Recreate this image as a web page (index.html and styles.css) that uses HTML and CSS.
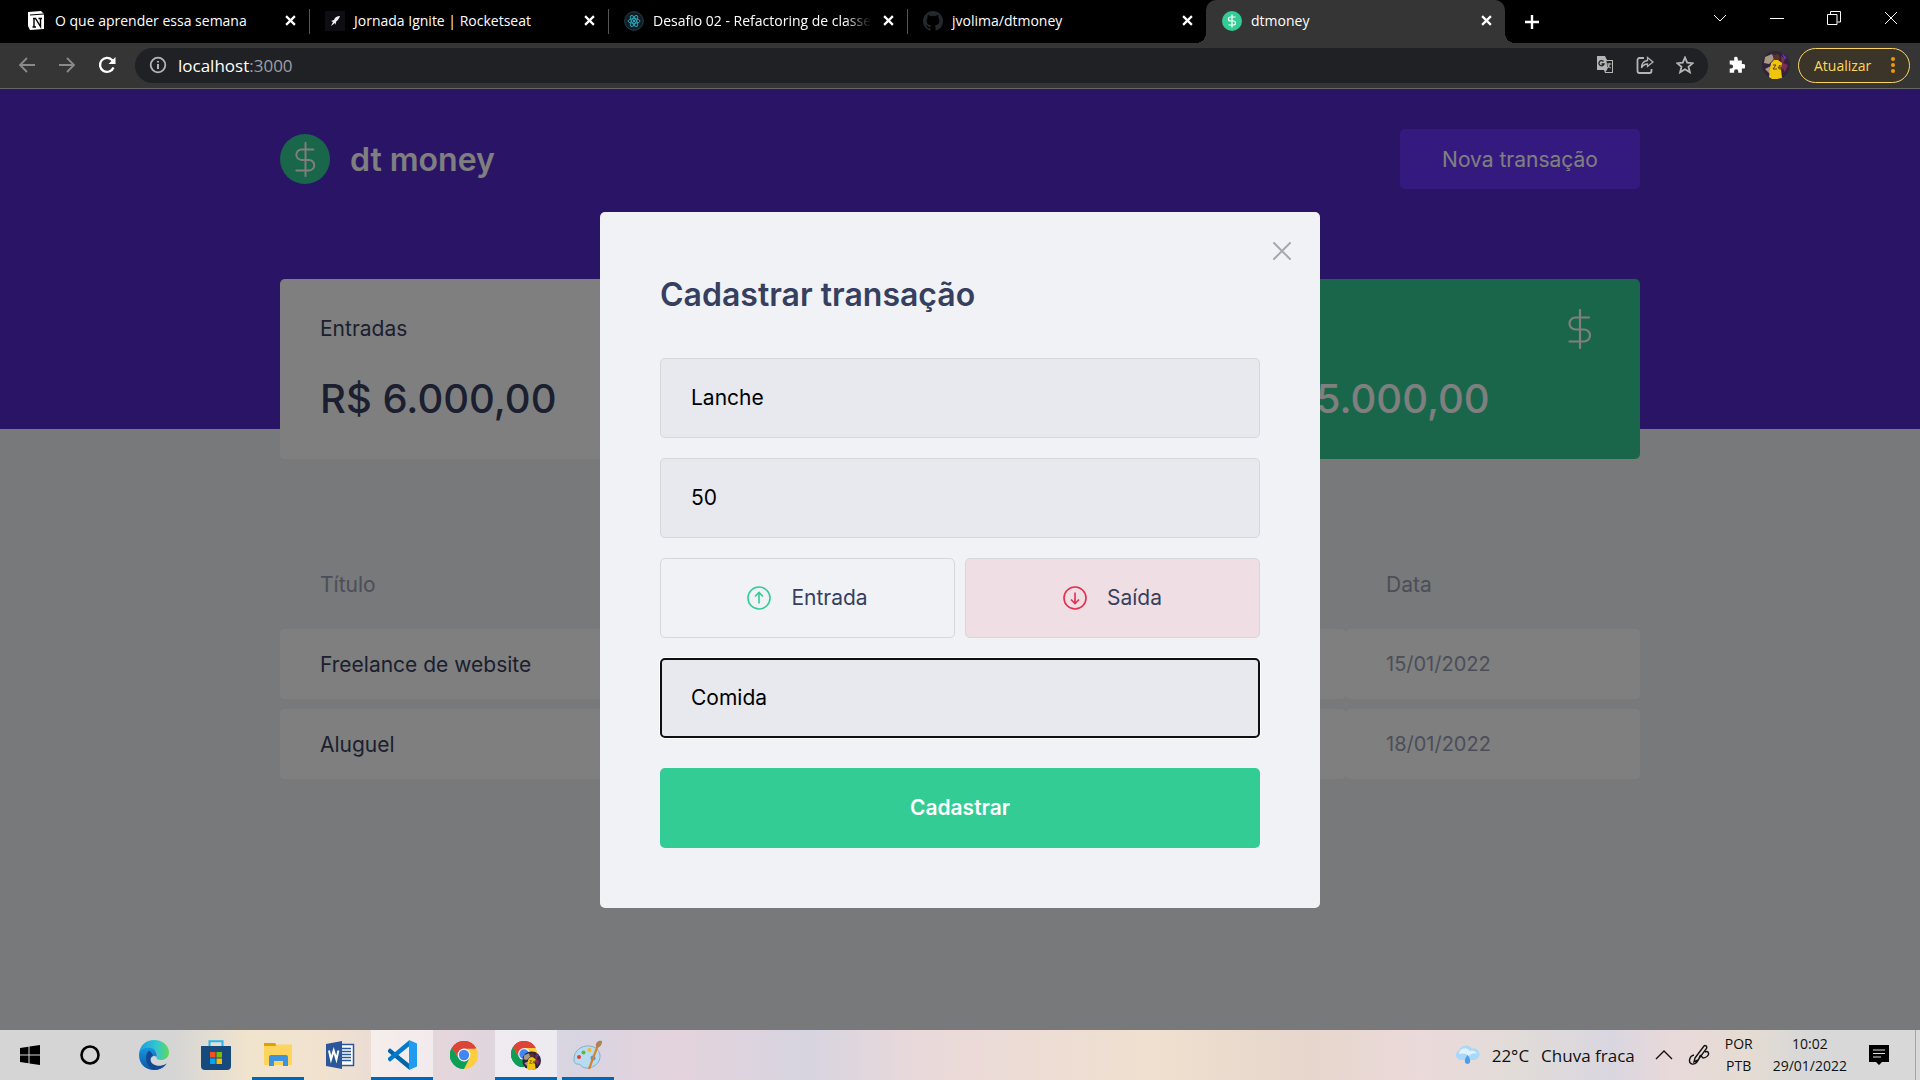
FILE: index.html
```html
<!DOCTYPE html>
<html lang="pt-BR">
<head>
<meta charset="utf-8">
<title>dtmoney</title>
<link rel="stylesheet" href="styles.css">
</head>
<body>
<svg class="defs" aria-hidden="true">
  <symbol id="x" viewBox="0 0 10 10"><path d="M1 1l8 8M9 1l-8 8" fill="none" stroke="currentColor" stroke-width="2"/></symbol>
  <symbol id="dollar" viewBox="0 0 24 40"><path d="M12 1v38M21 8.500H7.500a6 6 0 0 0 0 12H16a6 6 0 0 1 0 12H1.500" fill="none" stroke="currentColor" stroke-width="2.200" stroke-linecap="round"/></symbol>
  <symbol id="chrome" viewBox="0 0 48 48"><path d="M24 24L3.200 12A24 24 0 0 1 44.800 12z" fill="#db4437"/><path d="M24 24L44.800 12A24 24 0 0 1 24 48z" fill="#ffcd40"/><path d="M24 24v24A24 24 0 0 1 3.200 12z" fill="#0f9d58"/><path d="M24 13h20.800L34 29 24 48l9.500-18.500zM3.200 12L14.500 29.500 24 24z" fill="#ffcd40"/><path d="M24 13h21.300A24 24 0 0 0 3.200 12l11.300 17z" fill="#db4437"/><path d="M3.200 12l11.300 17.500L24 35l9.500-5.500L24 48A24 24 0 0 1 3.200 12z" fill="#0f9d58"/><circle cx="24" cy="24" r="11" fill="#f4f4f4"/><circle cx="24" cy="24" r="8.800" fill="#4285f4"/></symbol>
  <symbol id="player" viewBox="0 0 28 28"><circle cx="14" cy="14" r="14" fill="#30233a"/><path d="M3 6l7-3 2 5-5 5-5-1zM3 18l6-3v9z" fill="#a99a85"/><path d="M19 5l4 3-2 4 5 2-3 7-3-4z" fill="#7d2e52"/><path d="M20 2l5 5-3 1z" fill="#7731b0"/><path d="M11 4l5-1 2 4-2 3h-4z" fill="#5b3423"/><path d="M9 12l3-3h4l4 3-1 6 1 9-5 1h-5l-3-2 1-8z" fill="#f0c50d"/><path d="M11 14h3l-3 4h4M18 14l-2 3h3m-1-3v5" fill="none" stroke="#60410f" stroke-width="1"/></symbol>
</svg>

<header class="browser">
  <div class="tabstrip">
    <div class="tabs">
      <div class="tab">
        <svg class="favicon" viewBox="0 0 20 20"><path d="M2 1l13-1 3 3v15l-14 1-2-4z" fill="#fff"/><path d="M4 4l14-1" stroke="#000"/><path d="M7 7.500h2.500l5 8V7.500m-2 0h3.500M8 7.500V16m-1.500 0H10" fill="none" stroke="#000" stroke-width="1.400"/></svg>
        <span class="tab-title">O que aprender essa semana</span>
        <button class="tab-close" aria-label="Fechar"><svg><use href="#x"/></svg></button>
      </div>
      <div class="tab">
        <svg class="favicon" viewBox="0 0 20 20"><path d="M0 0h20v20H0z" fill="#0d0d12"/><path d="M15 5c-3 0-5 1-6 4l-3 1 2 1-2 4 4-3 .5 2 .7-3.500C13 9 14 8 15 5z" fill="#f1f1f1"/></svg>
        <span class="tab-title">Jornada Ignite | Rocketseat</span>
        <button class="tab-close" aria-label="Fechar"><svg><use href="#x"/></svg></button>
      </div>
      <div class="tab">
        <svg class="favicon" viewBox="0 0 20 20"><circle cx="10" cy="10" r="9.300" fill="#121c22" stroke="#1f4351"/><g fill="none" stroke="#25a5bb"><ellipse cx="10" cy="10" rx="6" ry="2.300"/><ellipse cx="10" cy="10" rx="6" ry="2.300" transform="rotate(60 10 10)"/><ellipse cx="10" cy="10" rx="6" ry="2.300" transform="rotate(120 10 10)"/></g><circle cx="10" cy="10" r="1.200" fill="#25a5bb"/></svg>
        <span class="tab-title tab-title-long">Desafio 02 - Refactoring de classe</span>
        <button class="tab-close" aria-label="Fechar"><svg><use href="#x"/></svg></button>
      </div>
      <div class="tab tab-last">
        <svg class="favicon" viewBox="0 0 16 16"><path fill="#24292e" d="M8 0C3.580 0 0 3.580 0 8c0 3.540 2.290 6.530 5.470 7.590.4.070.55-.17.55-.38 0-.19-.01-.82-.01-1.490-2.010.37-2.530-.49-2.690-.94-.09-.23-.48-.94-.82-1.130-.28-.15-.68-.52-.01-.53.63-.01 1.080.58 1.230.82.72 1.210 1.870.87 2.330.66.07-.52.28-.87.51-1.070-1.780-.2-3.640-.89-3.640-3.950 0-.87.31-1.590.82-2.150-.08-.2-.36-1.020.08-2.120 0 0 .67-.21 2.200.82a7.600 7.600 0 0 1 4 0c1.530-1.040 2.200-.82 2.200-.82.44 1.100.16 1.920.08 2.120.51.56.82 1.270.82 2.150 0 3.070-1.870 3.750-3.650 3.950.29.25.54.73.54 1.480 0 1.070-.01 1.930-.01 2.200 0 .21.15.46.55.38A8 8 0 0 0 16 8c0-4.420-3.580-8-8-8z"/></svg>
        <span class="tab-title">jvolima/dtmoney</span>
        <button class="tab-close" aria-label="Fechar"><svg><use href="#x"/></svg></button>
      </div>
      <div class="tab tab-active">
        <svg class="favicon" viewBox="0 0 20 20"><circle cx="10" cy="10" r="10" fill="#33cc95"/><path d="M10 3.500v13M13.500 6H8.500a2 2 0 0 0 0 4h3a2 2 0 0 1 0 4H6.500" fill="none" stroke="#fff" stroke-width="1.200"/></svg>
        <span class="tab-title">dtmoney</span>
        <button class="tab-close" aria-label="Fechar"><svg><use href="#x"/></svg></button>
      </div>
      <button class="new-tab" aria-label="Nova guia"><svg viewBox="0 0 16 16"><path d="M8 1v14M1 8h14" stroke="#fff" stroke-width="2.400"/></svg></button>
    </div>
    <div class="window-controls">
      <button aria-label="Pesquisar guias"><svg viewBox="0 0 14 14"><path d="M1 4l6 6 6-6"/></svg></button>
      <button aria-label="Minimizar"><svg viewBox="0 0 14 14"><path d="M0 7.500h14"/></svg></button>
      <button aria-label="Restaurar"><svg viewBox="0 0 14 14"><path d="M.5 3.500h9.500v10H.5zM3.500 3V.5h10v10.500h-3"/></svg></button>
      <button aria-label="Fechar janela"><svg viewBox="0 0 14 14"><path d="M1 1l12 12M13 1L1 13"/></svg></button>
    </div>
  </div>
  <div class="toolbar">
    <div class="nav">
      <button class="dim" aria-label="Voltar"><svg viewBox="0 0 18 18"><path d="M17 9H2M9 2L2 9l7 7"/></svg></button>
      <button class="dim" aria-label="Avançar"><svg viewBox="0 0 18 18"><path d="M1 9h15M9 2l7 7-7 7"/></svg></button>
      <button aria-label="Recarregar"><svg viewBox="0 0 18 18"><path d="M15.500 11.500A7 7 0 1 1 14 4l2 2" stroke-width="2.300"/><path d="M17.500 1v7h-7z" fill="#fff" stroke="none"/></svg></button>
    </div>
    <div class="address">
      <svg viewBox="0 0 18 18"><circle cx="9" cy="9" r="7.300"/><path d="M9 8v5M9 5v1.600" stroke-width="2"/></svg>
      <span class="url">localhost<span class="port">:3000</span></span>
      <div class="address-actions">
        <svg viewBox="0 0 18 18"><path d="M1 0h8l2 4h6v13H9l-1-3H1z" fill="#b5b5b5" stroke="none"/><path d="M10.500 5H16v11H9.500l2-3z" fill="#202124" stroke="none"/><path d="M7.500 5.500A2.600 2.600 0 1 0 8 8H5.500" stroke="#202124" stroke-width="1.300"/><path d="M11 8h4.500M13.300 7v1c0 2-1 3-2 4m.5-3c.6 1.600 1.700 2.600 3 3" stroke-width="1.100"/></svg>
        <svg viewBox="0 0 18 18"><path d="M8 2H3.500A2 2 0 0 0 1.500 4v11a2 2 0 0 0 2 2h10a2 2 0 0 0 2-2v-2"/><path d="M11.500 1.500L17 6l-5.500 4.500V8C8.500 8 7 9 5.500 12c0-4 2-7 6-7.500z" stroke-width="1.300"/></svg>
        <svg viewBox="0 0 18 18"><path d="M9 1.500l2.200 5.200 5.600.5-4.300 3.600 1.400 5.500L9 13.300l-4.900 3 1.400-5.500L1.200 7.200l5.600-.5z"/></svg>
      </div>
    </div>
    <button class="plain" aria-label="Extensões"><svg viewBox="0 0 20 20"><path d="M8 1.500a2.300 2.300 0 0 1 4 1.500v2h4.500V9H18a2.400 2.400 0 0 1 0 5h-1.500v4.500h-4V17a2.300 2.300 0 0 0-4.600 0v1.500H3V14h1.500a2.300 2.300 0 0 0 0-4.600H3V5h5z" fill="#fff"/></svg></button>
    <button class="plain avatar" aria-label="Perfil"><svg><use href="#player"/></svg></button>
    <button class="update">Atualizar<svg viewBox="0 0 4 18"><circle cx="2" cy="3" r="2"/><circle cx="2" cy="9" r="2"/><circle cx="2" cy="15" r="2"/></svg></button>
  </div>
</header>

<div class="viewport">
  <div class="page">
    <header class="hero">
      <div class="container hero-row">
        <div class="logo"><span class="logo-mark"><svg><use href="#dollar"/></svg></span>dt money</div>
        <button class="new-transaction">Nova transação</button>
      </div>
    </header>
    <main class="container">
      <section class="summary">
        <article class="card"><p>Entradas</p><strong>R$ 6.000,00</strong></article>
        <article class="card"></article>
        <article class="card card-total"><svg><use href="#dollar"/></svg><strong>R$ 5.000,00</strong></article>
      </section>
      <table class="transactions">
        <thead><tr><th>Título</th><th></th><th></th><th class="date">Data</th></tr></thead>
        <tbody>
          <tr><td class="name">Freelance de website</td><td></td><td></td><td>15/01/2022</td></tr>
          <tr><td class="name">Aluguel</td><td></td><td></td><td>18/01/2022</td></tr>
        </tbody>
      </table>
    </main>
  </div>
  <div class="overlay">
    <form class="modal" role="dialog" aria-labelledby="modal-title">
      <button type="button" class="modal-close" aria-label="Fechar modal"><svg viewBox="0 0 20 20"><path d="M2 2l16 16M18 2L2 18" fill="none" stroke="currentColor" stroke-width="2" stroke-linecap="round"/></svg></button>
      <h2 id="modal-title">Cadastrar transação</h2>
      <div class="fields">
        <input type="text" aria-label="Título" value="Lanche">
        <input type="text" inputmode="numeric" aria-label="Valor" value="50">
        <div class="types">
          <button type="button" class="type type-in"><svg viewBox="0 0 24 24"><circle cx="12" cy="12" r="11"/><path d="M12 17.500v-11M8 10.500l4-4 4 4"/></svg><span>Entrada</span></button>
          <button type="button" class="type type-out"><svg viewBox="0 0 24 24"><circle cx="12" cy="12" r="11"/><path d="M12 6.500v11M8 13.500l4 4 4-4"/></svg><span>Saída</span></button>
        </div>
        <input class="focused" type="text" aria-label="Categoria" value="Comida">
      </div>
      <button type="submit" class="submit">Cadastrar</button>
    </form>
  </div>
</div>

<footer class="taskbar">
  <div class="apps">
    <button class="app system" aria-label="Iniciar"><svg viewBox="0 0 20 20"><path d="M0 3l8.500-1.200v7.700H0zM9.500 1.600L20 0v9.500H9.500zM0 10.500h8.500v7.700L0 17zM9.500 10.500H20V20L9.500 18.400z"/></svg></button>
    <button class="app system" aria-label="Cortana"><svg viewBox="0 0 20 20"><circle cx="10" cy="10" r="8.500" fill="none" stroke="#000" stroke-width="2.600"/></svg></button>
  </div>
  <div class="apps pinned">
    <button class="app" aria-label="Edge"><svg viewBox="0 0 30 30"><defs><linearGradient id="e1"><stop stop-color="#1b9de2"/><stop offset=".6" stop-color="#31c8ce"/><stop offset="1" stop-color="#62d957"/></linearGradient><linearGradient id="e2" x2="0" y2="1"><stop stop-color="#1994e0"/><stop offset="1" stop-color="#0b58a5"/></linearGradient></defs><path d="M0 14C1 5 7 0 15 0c9 0 15 6 15 12.500 0 5-4 7.500-8 7.500-3 0-5-1-4.500-2.500 2-3.500 0-8-5-8C6 9.500 1 12 0 14z" fill="url(#e1)"/><path d="M0 15c0-5 6-8 11-7 5 .5 8 5 6.500 9-2-2-5-1-6 2-1.500 4 3 7.500 8 7.500 4 0 7-2 8.500-3.500C26 27 21 30 15 30 6 30 0 23.500 0 15z" fill="url(#e2)"/><path d="M10 10.500C6 14 5 24 14 29.800c5 .6 10-1.800 13-6-6 4-16 2-15.500-5C12 17 13 16 14 15.500c-1-2-2-4-4-5z" fill="#124990"/></svg></button>
    <button class="app" aria-label="Microsoft Store"><svg viewBox="0 0 30 30"><path d="M8.500 7V1.200h13V7" fill="none" stroke="#24b5ef" stroke-width="2"/><path d="M0 6h30v20a4 4 0 0 1-4 4H4a4 4 0 0 1-4-4z" fill="#174a7c"/><path d="M9 12h5.500v5.500H9z" fill="#f25022"/><path d="M15.500 12H21v5.500h-5.500z" fill="#7fba00"/><path d="M9 18.500h5.500V24H9z" fill="#00a4ef"/><path d="M15.500 18.500H21V24h-5.500z" fill="#ffb900"/></svg></button>
    <button class="app running" aria-label="Explorador de Arquivos"><svg viewBox="0 0 30 30"><path d="M1 3h11l3 4H1z" fill="#dfa000"/><path d="M1 6h11l3-1.500h14V25H1z" fill="#ffd45c"/><path d="M6 26V17a2 2 0 0 1 2-2h15a2 2 0 0 1 2 2v9h-5v-5h-9v5z" fill="#3e94dc"/></svg></button>
    <button class="app" aria-label="Word"><svg viewBox="0 0 30 30"><path d="M16 4.500h12.500v21H16z" fill="#fff" stroke="#2b579a" stroke-width="1.500"/><path d="M17 8.500h9M17 11.500h9M17 14.500h9M17 17.500h9M17 20.500h9" stroke="#2b579a" stroke-width="1.400"/><path d="M1 4l16-3v28L1 26z" fill="#2b579a"/><path d="M4 10.500l2 9 2.700-9 2.700 9 2-9" fill="none" stroke="#fff" stroke-width="2"/></svg></button>
    <button class="app open" aria-label="Visual Studio Code"><svg viewBox="0 0 30 30"><path d="M1 10l2-1.700L22.500 24v6L1 12z" fill="#0065a9"/><path d="M1 20l2 1.700L22.500 6V0L1 18z" fill="#007acc"/><path d="M22 0l8 3.500v23L22 30z" fill="#1f9cf0"/></svg></button>
    <button class="app" aria-label="Chrome"><svg viewBox="0 0 30 30"><use href="#chrome" width="28" height="28" x="1" y="1"/></svg></button>
    <button class="app open" aria-label="Chrome, perfil"><svg viewBox="0 0 32 32"><use href="#chrome" width="28" height="28" x="0" y="1"/><use href="#player" width="20" height="20" x="12" y="12"/></svg></button>
    <button class="app running" aria-label="Paint"><svg viewBox="0 0 30 30"><path d="M17 6C8 5 1 11 1 19c0 5 2 5 4 5 3 0 3 3 7 4 9 1 16-6 15-13-1-5-4-8-10-9z" fill="#b7dcf0" stroke="#84adc9"/><circle cx="6" cy="17" r="2" fill="#e33b35"/><circle cx="10.500" cy="12.500" r="2" fill="#62b539"/><circle cx="16.500" cy="10" r="2" fill="#f4bd20"/><circle cx="20" cy="18" r="2.500" fill="#4a9bd6"/><path d="M25 5L16 29" stroke="#d9812d" stroke-width="2.200"/><path d="M23 7c-1-4 2-7 6-6 0 4-2 6-5 7z" fill="#b08252"/></svg></button>
  </div>
  <div class="tray">
    <div class="weather"><svg viewBox="0 0 26 20"><path d="M6 15a5 5 0 0 1-1-9.500 7.500 7.500 0 0 1 13-2 5.500 5.500 0 0 1 3 11.500z" fill="#a9d8f8"/><path d="M5 9a6 6 0 0 1 11-3 5 5 0 0 1 7 3c-3-2-7 0-8 2-3-3-7-3-10-2z" fill="#dff2fe"/><path d="M13.500 10c4 5 3 9 0 9s-4-4 0-9z" fill="#4b9eef"/></svg><span>22°C</span><span>Chuva fraca</span></div>
    <svg class="line-icon" viewBox="0 0 18 18"><path d="M1 13l8-8 8 8"/></svg>
    <svg class="line-icon pen" viewBox="0 0 22 22"><path d="M7 14L16 2c1-1 3.500 0 2.500 2.500L10 16l-4 2zM6 11c-5 1-6 8-2 9 5 1 7-5 8-8 1-2 2 2 3 2 3 0 7-3 5-6-1-1-3 0-3 0"/></svg>
    <div class="stack"><span>POR</span><span>PTB</span></div>
    <div class="stack"><span>10:02</span><span>29/01/2022</span></div>
    <svg class="notice" viewBox="0 0 20 20"><path d="M0 0h20v17h-7l-3 3-3-3H0z"/><path d="M4 5h12M4 8.500h12M4 12h8" stroke="#ddd" stroke-width="1.200"/></svg>
  </div>
</footer>
</body>
</html>
```
FILE: styles.css
```css
* { box-sizing: border-box; margin: 0; padding: 0; }

:root {
  --chrome: #353535;
  --purple: #5429cc;
  --green: #33cc95;
  --title: #363f5f;
  --body: #969cb3;
  --background: #f0f2f5;
}

body {
  display: flex;
  flex-direction: column;
  min-height: 100vh;
  font-family: Inter, "Open Sans", sans-serif;
  font-size: 21px;
}

button, input { font: inherit; border: 0; background: none; color: inherit; }
svg { display: block; flex: none; }
.defs { display: none; }

/* Browser frame */
.browser {
  background: #000;
  color: #fff;
  font-family: "Open Sans", sans-serif;
  font-size: 14px;
}
.tabstrip { display: flex; justify-content: space-between; height: 43px; }
.tabs { display: flex; padding-left: 10px; }
.tab {
  position: relative;
  display: flex;
  align-items: center;
  gap: 9px;
  width: 299px;
  padding: 0 11px 2px 16px;
}
.tab:not(.tab-last):not(.tab-active)::after {
  content: "";
  position: absolute;
  right: -1px;
  top: 9px;
  width: 1px;
  height: 25px;
  background: #555;
}
.tab-active { background: var(--chrome); border-radius: 10px 10px 0 0; }
.tab-active::before, .tab-active::after {
  content: "";
  position: absolute;
  bottom: 0;
  width: 10px;
  height: 10px;
}
.tab-active::before { left: -10px; background: radial-gradient(circle at 0 0, #000 10px, var(--chrome) 10px); }
.tab-active::after { right: -10px; background: radial-gradient(circle at 100% 0, #000 10px, var(--chrome) 10px); }
.favicon { width: 20px; height: 20px; }
.tab-title { flex: 1; white-space: nowrap; }
.tab-title-long { mask-image: linear-gradient(90deg, #000 calc(100% - 26px), transparent); }
.tab-close { display: grid; place-items: center; width: 16px; height: 20px; }
.tab-close svg { width: 11px; height: 11px; }
.new-tab { width: 54px; display: grid; place-items: center; }
.new-tab svg { width: 16px; height: 16px; }
.window-controls { display: flex; height: 36px; padding-right: 1px; }
.window-controls button { width: 57px; display: grid; place-items: center; }
.window-controls svg { width: 14px; height: 14px; fill: none; stroke: #fff; }

.toolbar {
  display: flex;
  align-items: center;
  height: 46px;
  padding: 0 10px 1px 7px;
  background: var(--chrome);
  border-bottom: 1px solid #666;
}
.toolbar svg { width: 18px; height: 18px; }
.nav { display: flex; width: 128px; }
.nav button { width: 40px; display: grid; place-items: center; }
.nav svg { fill: none; stroke: #fff; stroke-width: 1.8px; }
.nav .dim svg { stroke: #8a8a8a; }
.address {
  flex: 1;
  display: flex;
  align-items: center;
  gap: 11px;
  height: 35px;
  padding: 0 14px;
  border-radius: 18px;
  background: #202124;
}
.address svg { fill: none; stroke: #b5b5b5; stroke-width: 1.8px; }
.url { flex: 1; font-size: 17px; }
.port { color: #9aa0a6; }
.address-actions { display: flex; gap: 22px; }
.plain { width: 40px; display: grid; place-items: center; margin-left: 8px; }
.plain + .plain { margin-left: 0; }
.toolbar .avatar svg { width: 28px; height: 28px; }
.update {
  display: flex;
  align-items: center;
  justify-content: space-between;
  width: 112px;
  height: 35px;
  padding: 0 14px 0 15px;
  margin-left: 2px;
  border: 1px solid #fdd663;
  border-radius: 18px;
  background: #3b3529;
  color: #fdd663;
}
.toolbar .update svg { width: 4px; fill: #f29900; }

/* Page */
.viewport { position: relative; flex: 1; background: var(--background); color: var(--title); }
.container { max-width: 1360px; margin: 0 auto; }
.hero { background: var(--purple); padding: 40px 20px 240px; }
.hero-row { display: flex; align-items: center; justify-content: space-between; }
.logo { display: flex; align-items: center; gap: 20px; font-size: 32px; font-weight: 600; color: #fff; }
.logo-mark { display: grid; place-items: center; width: 50px; height: 50px; border-radius: 50%; background: var(--green); }
.logo-mark svg { width: 21px; height: 35px; }
.new-transaction { width: 240px; height: 60px; border-radius: 5px; background: #6933ff; color: #fff; }

.summary { display: grid; grid-template-columns: repeat(3, 1fr); gap: 40px; margin-top: -150px; }
.card {
  display: flex;
  flex-direction: column;
  justify-content: space-between;
  height: 180px;
  padding: 30px 40px;
  border-radius: 5px;
  background: #fff;
  line-height: 40px;
}
.card strong { font-size: 40px; font-weight: 500; line-height: 60px; }
.card-total { background: var(--green); color: #fff; }
.card-total svg { width: 24px; height: 40px; align-self: flex-end; margin-right: 8px; }

.transactions { width: 100%; margin-top: 80px; border-spacing: 0 10px; table-layout: fixed; text-align: left; font-size: 20px; color: var(--body); }
.transactions th, .transactions td { height: 70px; padding: 0 40px; font-weight: 400; }
.transactions th { font-size: 21px; }
.transactions td { background: #fff; border-radius: 5px; }
.transactions .date { width: 294px; }
.transactions .name { color: var(--title); font-size: 21px; white-space: nowrap; }

/* Transaction modal */
.overlay {
  position: absolute;
  inset: 0;
  display: grid;
  place-items: center;
  background: rgba(0, 0, 0, .5);
}
.modal {
  position: relative;
  width: 100%;
  max-width: 720px;
  padding: 60px;
  border-radius: 5px;
  background: var(--background);
}
.modal-close { position: absolute; top: 29px; right: 28px; color: #a6a8b1; }
.modal-close svg { width: 20px; height: 20px; }
.modal h2 { margin-bottom: 40px; font-size: 32px; font-weight: 600; line-height: 46px; }
.fields { display: grid; gap: 20px; margin-bottom: 30px; }
.fields input {
  width: 100%;
  height: 80px;
  padding: 0 30px;
  border: 1px solid #d7d7d7;
  border-radius: 5px;
  background: #e7e9ee;
  color: #000;
}
.fields .focused { padding: 0 29px; border: 2px solid #101010; box-shadow: 0 0 0 1px #fff; }
.types { display: grid; grid-template-columns: 1fr 1fr; gap: 10px; }
.type {
  display: flex;
  align-items: center;
  justify-content: center;
  gap: 20px;
  height: 80px;
  border: 1px solid #d7d7d7;
  border-radius: 5px;
}
.type svg { width: 24px; height: 24px; fill: none; stroke: var(--green); stroke-width: 1.6px; }
.type-out { background: #efdee4; }
.type-out svg { stroke: #e52e4d; }
.submit { width: 100%; height: 80px; border-radius: 5px; background: var(--green); color: #fff; font-weight: 600; }

/* Taskbar */
.taskbar {
  display: flex;
  height: 50px;
  background: linear-gradient(90deg, #d5d5d5 9%, #f1e4cd 13%, #f0e2cf 17%, #e6d6da 22%, #d8d5e2 30%, #e4d3dc 35%, #d7d4e0 42%, #ead9da 48%, #efe0cf 60%, #e6d6cc 68%, #ebdada 74%, #e1dcd8 79%, #dad6e0 84%, #e8d9da 87%, #e5dcd2 91%, #d8d8d8 94%);
  color: #111;
  font-family: "Open Sans", sans-serif;
}
.apps { display: flex; }
.pinned { margin-left: 3px; }
.app { position: relative; width: 62px; display: grid; place-items: center; }
.app svg { width: 30px; height: 30px; }
.system { width: 60px; }
.system svg { width: 20px; height: 20px; }
.open { background: rgba(255, 255, 255, .5); }
.open::after, .running::after {
  content: "";
  position: absolute;
  bottom: 0;
  left: 0;
  right: 0;
  height: 3px;
  background: #0067b8;
}
.running::after { left: 5px; right: 5px; }
.tray {
  display: flex;
  align-items: center;
  margin: 0 4px 0 auto;
  padding-right: 26px;
  border-right: 1px solid #a5a5a5;
  font-size: 14px;
}
.weather { display: flex; align-items: center; gap: 12px; margin-right: 20px; font-size: 17px; }
.weather svg { width: 26px; height: 20px; }
.line-icon { width: 18px; height: 18px; margin-right: 15px; fill: none; stroke: #111; stroke-width: 1.4px; }
.pen { width: 22px; height: 22px; }
.stack { display: grid; justify-items: center; margin-right: 20px; line-height: 22px; }
.stack + .notice { margin-left: 2px; }
.notice { width: 20px; height: 20px; }
```
